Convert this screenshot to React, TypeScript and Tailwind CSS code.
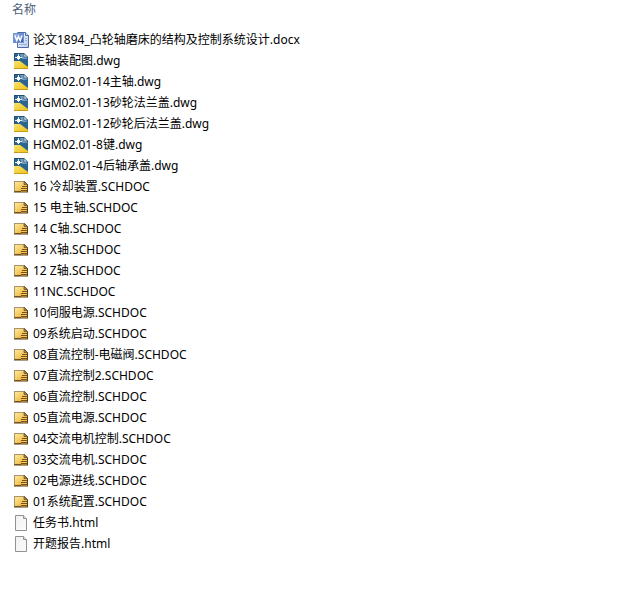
import React from 'react';

type FileKind = 'docx' | 'dwg' | 'schdoc' | 'html';

interface FileItem {
  name: string;
  kind: FileKind;
}

const files: FileItem[] = [
  { name: '论文1894_凸轮轴磨床的结构及控制系统设计.docx', kind: 'docx' },
  { name: '主轴装配图.dwg', kind: 'dwg' },
  { name: 'HGM02.01-14主轴.dwg', kind: 'dwg' },
  { name: 'HGM02.01-13砂轮法兰盖.dwg', kind: 'dwg' },
  { name: 'HGM02.01-12砂轮后法兰盖.dwg', kind: 'dwg' },
  { name: 'HGM02.01-8键.dwg', kind: 'dwg' },
  { name: 'HGM02.01-4后轴承盖.dwg', kind: 'dwg' },
  { name: '16 冷却装置.SCHDOC', kind: 'schdoc' },
  { name: '15 电主轴.SCHDOC', kind: 'schdoc' },
  { name: '14 C轴.SCHDOC', kind: 'schdoc' },
  { name: '13 X轴.SCHDOC', kind: 'schdoc' },
  { name: '12 Z轴.SCHDOC', kind: 'schdoc' },
  { name: '11NC.SCHDOC', kind: 'schdoc' },
  { name: '10伺服电源.SCHDOC', kind: 'schdoc' },
  { name: '09系统启动.SCHDOC', kind: 'schdoc' },
  { name: '08直流控制-电磁阀.SCHDOC', kind: 'schdoc' },
  { name: '07直流控制2.SCHDOC', kind: 'schdoc' },
  { name: '06直流控制.SCHDOC', kind: 'schdoc' },
  { name: '05直流电源.SCHDOC', kind: 'schdoc' },
  { name: '04交流电机控制.SCHDOC', kind: 'schdoc' },
  { name: '03交流电机.SCHDOC', kind: 'schdoc' },
  { name: '02电源进线.SCHDOC', kind: 'schdoc' },
  { name: '01系统配置.SCHDOC', kind: 'schdoc' },
  { name: '任务书.html', kind: 'html' },
  { name: '开题报告.html', kind: 'html' },
];

const Gradients = () => (
  <svg className="absolute size-0" aria-hidden="true">
    <defs>
      <linearGradient id="word-page" x1="0" y1="0" x2="1" y2="1">
        <stop offset="0" stopColor="#ffffff" />
        <stop offset="1" stopColor="#b4cbee" />
      </linearGradient>
      <linearGradient id="word-badge" x1="0" y1="0" x2="1" y2="1">
        <stop offset="0" stopColor="#a9c2ee" />
        <stop offset="1" stopColor="#2a55ad" />
      </linearGradient>
      <linearGradient id="dwg-yellow" x1="0" y1="0" x2="1" y2="1">
        <stop offset="0" stopColor="#f7e271" />
        <stop offset="1" stopColor="#efc010" />
      </linearGradient>
      <linearGradient id="sch-body" x1="0" y1="0" x2="1" y2="1">
        <stop offset="0" stopColor="#fdeba6" />
        <stop offset="0.5" stopColor="#f5cb60" />
        <stop offset="1" stopColor="#d8962a" />
      </linearGradient>
      <linearGradient id="html-page" x1="0" y1="0" x2="1" y2="1">
        <stop offset="0" stopColor="#f0f0f0" />
        <stop offset="1" stopColor="#fcfcfc" />
      </linearGradient>
    </defs>
  </svg>
);

const WordIcon = () => (
  <svg viewBox="0 0 16 16" className="size-4 shrink-0" aria-hidden="true">
    <path d="M4.5.5h8l3 3v12h-11z" fill="url(#word-page)" stroke="#4d6ca6" />
    <path d="M12.5.5v3h3" fill="#dce7f8" stroke="#4d6ca6" />
    <path d="M12 6.5h2M12 8.500h2M6 12.5h8" stroke="#9bb3de" />
    <rect x=".5" y="1.5" width="10" height="9" fill="url(#word-badge)" stroke="#6f8fce" />
    <path d="M2 3.500 3.800 8.500 5.500 4.500 7.200 8.500 9 3.500" fill="none" stroke="#fff" strokeWidth="1.5" />
  </svg>
);

const DwgIcon = () => (
  <svg viewBox="0 0 16 16" className="size-4 shrink-0" aria-hidden="true">
    <path d="M1 0h10l4 4v12H1z" fill="#2b658f" />
    <path d="M1 8h6l8 6v2H1z" fill="url(#dwg-yellow)" />
    <path d="M1 15.500h14" stroke="#c59c17" />
    <path d="M7 1h4v3h3v2H9z" fill="#6f9dbd" />
    <path d="M11 .5v3.500h3.500z" fill="#e6eef4" stroke="#2a5373" strokeWidth=".6" />
    <path d="M5.500 1v6M2 4.500h7" stroke="#e6eff5" />
    <rect x="4" y="3" width="3" height="3" fill="#fff" />
    <path d="M1.500 8V.5H11" fill="none" stroke="#244f70" />
  </svg>
);

const SchdocIcon = () => (
  <svg viewBox="0 0 16 16" className="size-4 shrink-0" aria-hidden="true">
    <path d="M1.500 2.500h10l3 3v7h-13z" fill="url(#sch-body)" stroke="#8b6628" />
    <path d="M1.500 12V2.500H11" fill="none" stroke="#a9946a" />
    <path d="M11 2.500v3h3.500z" fill="#a89060" stroke="#4c391b" strokeWidth=".6" />
    <path d="M8 9h1V7h6v6H8z" fill="#f4c75c" />
    <path d="M9 7.500h6M8 9.500h7M8 11.500h7" stroke="#7a5217" />
    <path d="M1 13h14M14.500 6v7" stroke="#5b3c12" />
  </svg>
);

const HtmlIcon = () => (
  <svg viewBox="0 0 16 16" className="size-4 shrink-0" aria-hidden="true">
    <path d="M2.500.5h8l3 3v12h-11z" fill="url(#html-page)" stroke="#929292" />
    <path d="M10.500.5v3h3" fill="#e4e4e4" stroke="#929292" />
  </svg>
);

const icons: Record<FileKind, React.FC> = {
  docx: WordIcon,
  dwg: DwgIcon,
  schdoc: SchdocIcon,
  html: HtmlIcon,
};

const FileRow: React.FC<{ file: FileItem }> = ({ file }) => {
  const Icon = icons[file.kind];

  return (
    <tr>
      <td className="p-0 pl-px">
        <div className="flex h-[21px] items-center gap-1 whitespace-nowrap">
          <Icon />
          <span>{file.name}</span>
        </div>
      </td>
    </tr>
  );
};

const App: React.FC = () => {
  return (
    <main className="min-h-screen bg-white px-3 pb-10 font-['Noto_Sans','Noto_Sans_CJK_SC',sans-serif] text-[12px] leading-5 text-black">
      <Gradients />
      <table className="w-full border-collapse">
        <thead>
          <tr>
            <th scope="col" className="p-0 pb-[9px] text-left font-normal text-[#4c607a]">
              名称
            </th>
          </tr>
        </thead>
        <tbody>
          {files.map((file) => (
            <FileRow key={file.name} file={file} />
          ))}
        </tbody>
      </table>
    </main>
  );
};

export default App;
